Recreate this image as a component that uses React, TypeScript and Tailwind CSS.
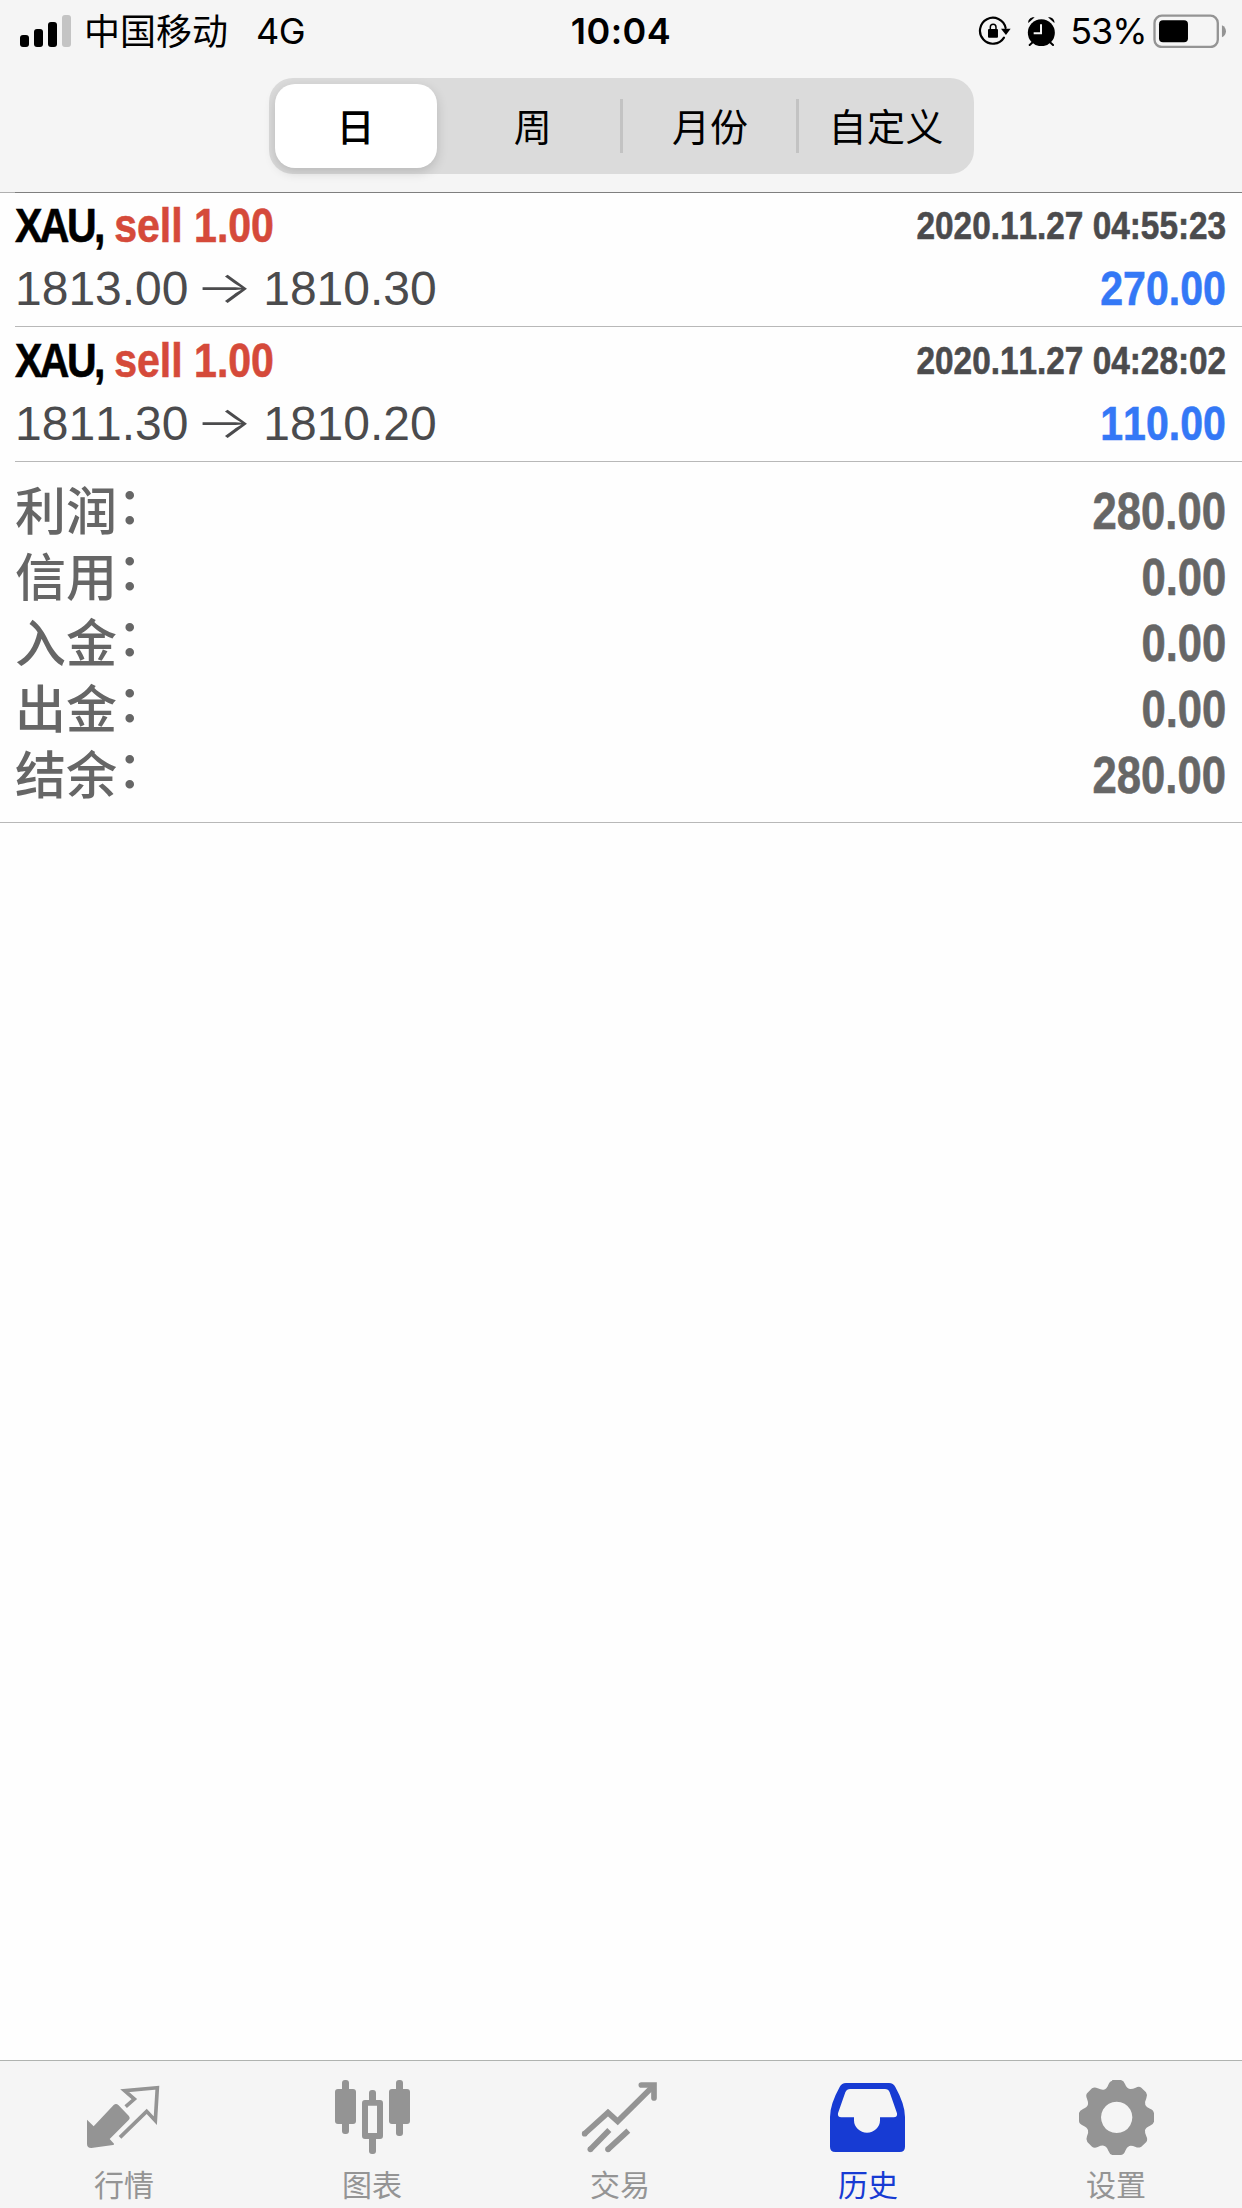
import type { ReactNode } from "react";

interface Deal {
  symbol: string;
  side: string;
  open: string;
  close: string;
  time: string;
  profit: string;
}

const deals: Deal[] = [
  {
    symbol: "XAU",
    side: "sell 1.00",
    open: "1813.00",
    close: "1810.30",
    time: "2020.11.27 04:55:23",
    profit: "270.00",
  },
  {
    symbol: "XAU",
    side: "sell 1.00",
    open: "1811.30",
    close: "1810.20",
    time: "2020.11.27 04:28:02",
    profit: "110.00",
  },
];

const totals = [
  { label: "利润", value: "280.00" },
  { label: "信用", value: "0.00" },
  { label: "入金", value: "0.00" },
  { label: "出金", value: "0.00" },
  { label: "结余", value: "280.00" },
];

// condensed bold look: Liberation Sans Bold squeezed horizontally
const condensed = "scale-x-[0.855] font-bold [font-kerning:none] [-webkit-text-stroke:0.6px_currentColor]";

function StatusBar() {
  return (
    <div className="flex h-[62px] items-center pl-5 pr-4 font-['Inter','Noto_Sans_CJK_SC',sans-serif] text-[36px] leading-none text-black">
      <div className="flex flex-1 items-center">
        <div className="flex h-8 items-end gap-[5px]">
          <span className="h-3 w-[9px] rounded-[3px] bg-black" />
          <span className="h-[18px] w-[9px] rounded-[3px] bg-black" />
          <span className="h-[25px] w-[9px] rounded-[3px] bg-black" />
          <span className="h-8 w-[9px] rounded-[3px] bg-[#c4c4c4]" />
        </div>
        <span className="ml-[13px] pt-[3px] font-['Liberation_Sans','Noto_Sans_CJK_SC',sans-serif]">中国移动</span>
        <span className="ml-7 tracking-[-0.5px]">4G</span>
      </div>
      <div className="pr-1 font-semibold tracking-[0.5px]">10:04</div>
      <div className="flex flex-1 items-center justify-end">
        <LockIcon />
        <AlarmIcon />
        <span className="ml-[15px] tracking-[-1px]">53%</span>
        <BatteryIcon />
      </div>
    </div>
  );
}

function LockIcon() {
  return (
    <svg viewBox="295 47 100 94" className="h-[31.3px] w-[33.3px]">
      <path
        d="M373 115 A39 39 0 1 1 378 86"
        fill="none"
        stroke="#000"
        strokeWidth="6.5"
        strokeLinecap="round"
      />
      <path d="M364 88h29l-14 19z" />
      <rect x="325" y="89" width="30" height="26" rx="3" />
      <path d="M332 90v-7a8.500 8.500 0 0 1 17 0v7" fill="none" stroke="#000" strokeWidth="4.500" />
    </svg>
  );
}

function AlarmIcon() {
  return (
    <svg viewBox="445 45 86 92" className="ml-[15px] h-[30.7px] w-[28.7px]">
      <circle cx="488" cy="95" r="40.500" />
      <path d="M449 66c-2-10 8-19 19-17z M527 66c2-10-8-19-19-17z" />
      <path d="M462 124l-9 8M514 124l9 8" stroke="#000" strokeWidth="6" strokeLinecap="round" />
      <path d="M487 70v27h-22" fill="none" stroke="#f5f5f5" strokeWidth="6" />
    </svg>
  );
}

function BatteryIcon() {
  return (
    <svg viewBox="819 38 220 104" className="ml-1.5 h-[34.7px] w-[73.3px]">
      <rect x="823.500" y="43" width="190" height="94" rx="22" fill="none" stroke="#949494" strokeWidth="7" />
      <rect x="837" y="57" width="87" height="66" rx="12" />
      <path d="M1026 72c16 7 16 29 0 36z" fill="#949494" />
    </svg>
  );
}

function PeriodPicker() {
  return (
    <div className="mx-auto mt-4 grid h-24 w-[705px] grid-cols-4 rounded-[24px] bg-[#dbdbdb] py-1.5 font-['Liberation_Sans','Noto_Sans_CJK_SC',sans-serif] text-[38px] leading-none text-black">
      <div className="pl-1.5 pr-2">
        <div className="flex h-full items-center justify-center rounded-[20px] bg-white pt-[3px] font-medium shadow-[0_4px_12px_rgba(0,0,0,0.16)]">
          日
        </div>
      </div>
      <div className="flex items-center justify-center pt-[3px]">周</div>
      <div className="flex items-center">
        <span className="-ml-px h-[54px] w-[3px] bg-[#c3c3c3]" />
        <span className="flex-1 pt-[3px] text-center">月份</span>
      </div>
      <div className="flex items-center">
        <span className="-ml-px h-[54px] w-[3px] bg-[#c3c3c3]" />
        <span className="flex-1 pt-[3px] text-center tracking-[0.5px]">自定义</span>
      </div>
    </div>
  );
}

function DealRow({ deal }: { deal: Deal }) {
  return (
    <div className="ml-[15px] h-[135px] border-b border-[#b8b8b8] pr-4 pt-[3px] font-['Liberation_Sans',sans-serif]">
      <div className="flex h-[62px] items-center justify-between">
        <div className={`origin-left text-[48px] leading-none text-black ${condensed}`}>
          <span className="tracking-[-3px]">{deal.symbol},</span>{" "}
          <span className="text-[#d54a3a]">{deal.side}</span>
        </div>
        <div className={`origin-right pb-0.5 text-[39px] leading-none text-[#4b4b4d] ${condensed}`}>{deal.time}</div>
      </div>
      <div className="flex h-16 items-center justify-between text-[48px] leading-none">
        <div className="whitespace-pre text-[#4b4b4d] [font-kerning:none]">
          {deal.open}{" "}
          <span className="inline-block w-12 -translate-x-0.5 -translate-y-0.5 scale-x-[1.38] text-center font-['Inter',sans-serif] text-[44px] leading-none font-light">
            →
          </span>{" "}
          {deal.close}
        </div>
        <div className={`origin-right text-[#3478f6] ${condensed}`}>{deal.profit}</div>
      </div>
    </div>
  );
}

function Totals() {
  return (
    <div className="border-b border-[#b8b8b8] pb-3.5 pl-[15px] pr-4 pt-4 font-['Liberation_Sans','Noto_Sans_CJK_SC',sans-serif] text-[#666]">
      {totals.map((t) => (
        <div key={t.label} className="flex h-[66px] items-center text-[51px] leading-none">
          <span className="pt-0.5 font-medium">{t.label}</span>
          <span className="pb-2.5 font-medium">：</span>
          <span className={`ml-auto origin-right ${condensed}`}>{t.value}</span>
        </div>
      ))}
    </div>
  );
}

function Tab({ label, viewBox, active, children }: { label: string; viewBox: string; active?: boolean; children: ReactNode }) {
  return (
    <div className={`flex w-62 flex-col items-center pt-[15px] ${active ? "text-[#173bd3]" : "text-[#949494]"}`}>
      <svg viewBox={viewBox} className="size-20" fill="currentColor" stroke="none">
        {children}
      </svg>
      <span className="mt-[15px] font-['Liberation_Sans','Noto_Sans_CJK_SC',sans-serif] text-[30px] leading-none">{label}</span>
    </div>
  );
}

function TabBar() {
  return (
    <nav className="flex h-[148px] border-t border-[#b0b3b0] bg-[#f5f5f5]">
      <Tab label="行情" viewBox="132 108 240 240">
        <path d="M141 239l20 20 60-64q7-6 14 0l31 32q6 7 0 13l-57 57 13 14q2 3-3 4l-65 9q-13 0-13-12z" />
        <path
          d="M257 200l26-23-29-25 98-9-6 99-26-28-80 78"
          fill="none"
          stroke="currentColor"
          strokeWidth="11"
        />
      </Tab>
      <Tab label="图表" viewBox="876 108 240 240">
        <rect x="885" y="147" width="63" height="105" rx="9" />
        <rect x="906" y="120" width="21" height="162" rx="9" />
        <rect x="1047" y="147" width="63" height="105" rx="9" />
        <rect x="1068" y="120" width="21" height="168" rx="9" />
        <rect x="987" y="150" width="21" height="40" rx="9" />
        <rect x="987" y="288" width="21" height="54" rx="9" />
        <path fillRule="evenodd" d="M975 180h45q9 0 9 9v99q0 9-9 9h-45q-9 0-9-9v-99q0-9 9-9zM984 197v82h27v-82z" />
      </Tab>
      <Tab label="交易" viewBox="120 108 240 240">
        <g fill="none" stroke="currentColor" strokeWidth="17">
          <path d="M133 282l71-64 29 26L340 138" />
          <path d="M304 135h38v39" strokeLinecap="round" />
          <path d="M150 329l58-59M203 329l62-57" />
        </g>
        <circle cx="134" cy="281" r="8.500" />
        <circle cx="151" cy="328" r="8.500" />
        <circle cx="204" cy="328" r="8.500" />
      </Tab>
      <Tab label="历史" viewBox="864 108 240 240" active>
        <path
          fillRule="evenodd"
          d="M918 129h129q13 0 19 12 29 52 29 90v89q0 16-16 16H886q-16 0-16-16v-89q0-38 29-90 6-12 19-12zM930 147q-9 0-14 10l-22 63q-2 12 10 12h38v9a39 37 0 0 0 78 0v-9h41q12 0 10-12l-22-63q-4-10-14-10z"
        />
      </Tab>
      <Tab label="设置" viewBox="228 108 240 240">
        <path
          fillRule="evenodd"
          d="M336 120h27q8 2 12 12 5 13 15 15 7 1 17-4 10-5 17 0l14 14q6 9 1 18-6 12-3 20 3 7 14 11 11 4 12 14v25q-2 8-12 12-13 5-15 14-1 7 4 18 5 10 0 17l-15 14q-9 5-17 1-12-5-19-3-8 3-12 14-5 13-14 13h-25q-8-2-12-13-5-13-14-15-7-1-18 4-10 5-17-1l-14-14q-5-8-1-17 5-11 3-18-2-9-14-14-12-4-13-13v-25q2-8 12-12 13-5 15-14 1-7-3-17-5-11 1-17l14-14q8-5 17 0 11 5 18 4 9-2 14-15 4-11 12-12zM350 185a47 47 0 1 0 .1 0z"
        />
      </Tab>
    </nav>
  );
}

export default function App() {
  return (
    <div className="flex h-[2208px] w-[1242px] flex-col bg-[#fefefe]">
      <header className="h-[192px] bg-[#f5f5f5]">
        <StatusBar />
        <PeriodPicker />
      </header>
      <div className="flex h-px">
        <span className="w-[15px] bg-[#b0b0b0]" />
        <span className="flex-1 bg-[#7f7f7f]" />
      </div>
      <main className="-mt-px flex-1">
        {deals.map((d) => (
          <DealRow key={d.time} deal={d} />
        ))}
        <Totals />
      </main>
      <TabBar />
    </div>
  );
}
